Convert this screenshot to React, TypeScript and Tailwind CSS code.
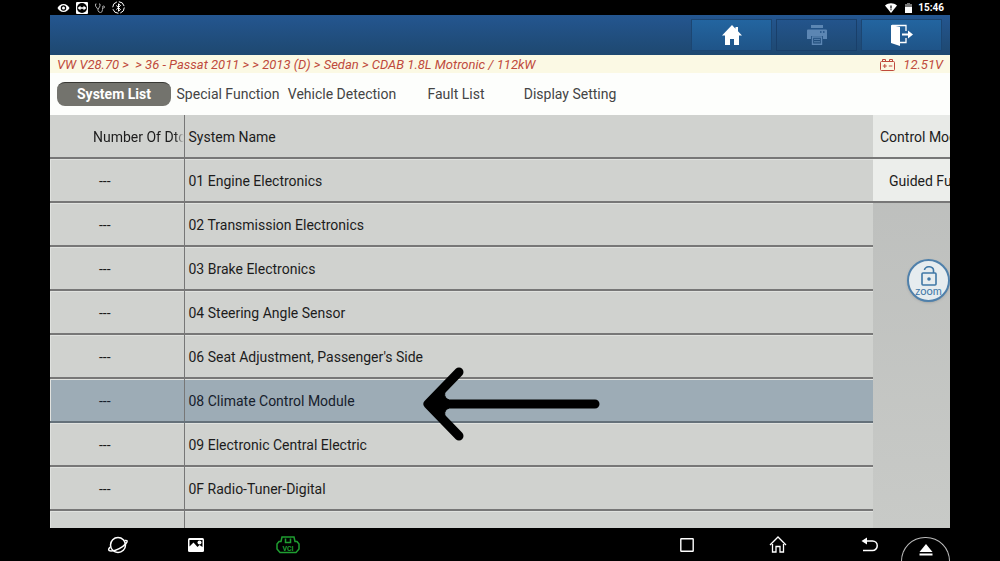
import React, { FC, ReactNode } from "react";

interface ISystem {
  code: string;
  name: string;
  active?: boolean;
}

interface IToolButton {
  label: string;
  disabled?: boolean;
  children: ReactNode;
}

const systems: ISystem[] = [
  { code: "01", name: "Engine Electronics" },
  { code: "02", name: "Transmission Electronics" },
  { code: "03", name: "Brake Electronics" },
  { code: "04", name: "Steering Angle Sensor" },
  { code: "06", name: "Seat Adjustment, Passenger's Side" },
  { code: "08", name: "Climate Control Module", active: true },
  { code: "09", name: "Electronic Central Electric" },
  { code: "0F", name: "Radio-Tuner-Digital" },
  { code: "10", name: "Parallel Parking Assist" },
];

const tabs = [
  "System List",
  "Special Function",
  "Vehicle Detection",
  "Fault List",
  "Display Setting",
];

const StatusBar: FC = () => (
  <div className="h-[15px] shrink-0 pl-[7px] pr-1.5 flex items-center justify-between text-white">
    <div className="flex items-center gap-[6px]">
      <svg width="13" height="12" viewBox="0 0 24 24" fill="currentColor">
        <path d="M12 4C6.500 4 2 7.500 0 12c2 4.500 6.500 8 12 8s10-3.500 12-8c-2-4.500-6.500-8-12-8zm0 13.500a5.500 5.500 0 1 1 0-11 5.500 5.500 0 0 1 0 11zm0-2.500a3 3 0 1 0 0-6 3 3 0 0 0 0 6z" />
      </svg>
      <svg width="12" height="12" viewBox="0 0 12 12">
        <rect width="12" height="12" rx="1" fill="#fff" />
        <circle cx="6" cy="6" r="5" fill="#000" />
        <path d="M1.500 6 4.500 3.800v1.400h3V3.800L10.500 6l-3 2.200V6.800h-3v1.400z" fill="#fff" />
      </svg>
      <svg width="12" height="12" viewBox="0 0 12 12" fill="none" stroke="#aaa">
        <path d="M2.500 2H1.500v2L4 7.500 6 4V2H5M4 7.500v1q.5 2 2.500 2t2-3V6" />
        <circle cx="9.500" cy="5" r="1" />
      </svg>
      <svg width="13" height="13" viewBox="0 0 13 13" fill="none" stroke="#fff">
        <circle cx="6.500" cy="6.500" r="5.800" strokeDasharray="7 2" />
        <path d="m4.300 4.500 4.200 4-2 1.700V2.800l2 1.700-4.200 4" />
      </svg>
    </div>
    <div className="flex items-center text-[10px] leading-none font-bold">
      <svg className="mr-2" width="12" height="10" viewBox="0 0 12 10">
        <path d="M0 2.500C3.500-.6 8.500-.6 12 2.500L6 10z" fill="#fff" />
        <path d="M6 2.500v3M6 6.300v1" stroke="#000" strokeWidth="1.200" />
      </svg>
      <svg className="mr-1.5" width="7" height="10" viewBox="0 0 7 10">
        <path d="M2 0h3v1h2v9H0V1h2z" fill="#fff" />
        <path d="M0 1h2V0h3v1h2v3H0z" fill="#777" />
      </svg>
      <span>15:46</span>
    </div>
  </div>
);

const ToolButton: FC<IToolButton> = ({ label, disabled, children }) => (
  <button
    aria-label={label}
    disabled={disabled}
    className="h-8 w-[81px] flex items-center justify-center border border-[#1c4672] bg-linear-to-b from-[#2365a0] to-[#1f5488] text-white disabled:bg-none disabled:border-[#193f6a] disabled:text-[#5c86b3]"
  >
    {children}
  </button>
);

const Header: FC = () => (
  <header className="h-10 shrink-0 pr-2 flex items-center justify-end gap-1 bg-linear-to-b from-[#245690] to-[#1e4870]">
    <ToolButton label="Home">
      <svg width="20" height="20" viewBox="0 0 20 20" fill="currentColor">
        <path d="M10 0 0 10.500h3V20h5v-6h4v6h5v-9.500h3L16 6.300V2h-2.500v1.700z" />
      </svg>
    </ToolButton>
    <ToolButton label="Print" disabled>
      <svg width="20" height="20" viewBox="0 0 20 20" fill="currentColor">
        <path d="M4 0h12v3H4zM1 4.500h18q1 0 1 1V14h-4v-3H4v3H0V5.500q0-1 1-1z" />
        <path d="M5.500 12h9v7.300h-9z" fill="none" stroke="currentColor" strokeWidth="1.400" />
        <path d="M7 14.300h6M7 16.800h6" stroke="currentColor" />
        <path d="M13 7h1.500M16 7h1.500" stroke="#1f4f83" strokeWidth="1.500" />
      </svg>
    </ToolButton>
    <ToolButton label="Exit">
      <svg width="22" height="22" viewBox="0 0 22 22" fill="currentColor">
        <path d="M0 1 9 3v19l-9-3z" />
        <path d="M1 1.500h14V7M15 14v4.500H9" fill="none" stroke="currentColor" strokeWidth="1.300" />
        <path d="M11 9.600h6V6.500l5 4-5 4v-3h-6z" />
      </svg>
    </ToolButton>
  </header>
);

const Breadcrumb: FC = () => (
  <div className="h-[18px] shrink-0 px-[7px] pt-0.5 flex items-center justify-between bg-[#fbf9e4] text-[#bf4a3c] text-[13px] leading-4 italic whitespace-pre">
    <span>{"VW V28.70 >  > 36 - Passat 2011 > > 2013 (D) > Sedan > CDAB 1.8L Motronic / 112kW"}</span>
    <span className="flex items-center gap-2">
      <svg width="15" height="12" viewBox="0 0 15 12" fill="none" stroke="currentColor">
        <rect x=".5" y="2.500" width="14" height="9" rx="1" />
        <path d="M2.500 2V.5h3V2M9.500 2V.5h3V2M2.800 7h4M4.800 5v4M8.800 7h3.500" />
      </svg>
      12.51V
    </span>
  </div>
);

const Tabs: FC = () => (
  <nav className="h-[42px] shrink-0 px-[7px] flex items-center bg-[#fdfefc] text-[14px] text-[#444]">
    {tabs.map((title, i) => (
      <button
        key={title}
        className={
          i === 0
            ? "w-[114px] h-6 rounded-lg border-t border-[#383834] bg-[#73736d] font-bold text-white"
            : "w-[114px] h-6 whitespace-nowrap"
        }
      >
        {title}
      </button>
    ))}
  </nav>
);

const SystemTable: FC = () => (
  <table className="w-full table-fixed border-collapse text-left">
    <thead>
      <tr className="h-[43px] border-b-2 border-[#777]">
        <th className="w-[134px] p-0 pt-0.5 pl-[43px] border-r border-[#777] font-normal whitespace-nowrap">
          <div className="overflow-hidden bg-linear-to-r from-[#1c1c1c] from-90% to-transparent bg-clip-text text-transparent">
            Number Of Dtc
          </div>
        </th>
        <th className="p-0 pt-0.5 pl-1 font-normal">System Name</th>
      </tr>
    </thead>
    <tbody>
      {systems.map((s) => (
        <tr
          key={s.code}
          className={
            s.active
              ? "h-11 border-b-2 border-[#65717a] bg-[#9dacb6] text-[#16202c]"
              : "h-11 last:h-[46px] border-b-2 border-[#777]"
          }
        >
          <td className="p-0 pt-0.5 pl-[49px] border-r border-[#777] shadow-[inset_1px_1px_#e0e2df]">
            ---
          </td>
          <td className="p-0 pt-0.5 pl-1 whitespace-nowrap shadow-[inset_0_1px_#e0e2df]">
            {s.code} {s.name}
          </td>
        </tr>
      ))}
    </tbody>
  </table>
);

const SidePanel: FC = () => (
  <aside className="w-[77px] shrink-0 self-stretch overflow-hidden bg-linear-to-b from-[#bbbdbb] to-[#c8cac7] whitespace-nowrap">
    <div className="h-11 pt-0.5 pl-[7px] flex items-center border-b-2 border-[#777] bg-[#e8eae7]">
      Control Module
    </div>
    <button className="h-11 w-full pt-0.5 pl-4 flex items-center border-b-2 border-[#777] bg-[#eceeeb]">
      Guided Functions
    </button>
  </aside>
);

const ZoomButton: FC = () => (
  <button className="absolute top-[144px] right-0 size-[43px] rounded-full border-2 border-[#4f80ab] bg-[#e6ecef] flex flex-col items-center justify-center text-[#3f77a6] shadow">
    <svg width="18" height="20" viewBox="0 0 18 20" fill="none" stroke="currentColor" strokeWidth="1.600">
      <rect x="2" y="7" width="14" height="12" rx="1" />
      <path d="M4.500 4a4.500 3.500 0 0 1 9 0.500V7" />
      <circle cx="9" cy="13" r="1" fill="currentColor" />
    </svg>
    <span className="text-[11px] leading-[10px] font-[Lato,sans-serif]">zoom</span>
  </button>
);

const Arrow: FC = () => (
  <svg
    className="absolute top-[252px] left-[372px]"
    width="180"
    height="74"
    viewBox="0 0 180 74"
    fill="none"
    stroke="#000"
    strokeWidth="9"
    strokeLinecap="round"
    strokeLinejoin="round"
  >
    <path d="M6 37h167M37 5 6 37l31 32" />
    <path d="M8 37 24 20q-4 11 3 13v8q-7 2-3 13z" fill="#000" strokeWidth="1" />
  </svg>
);

const NavBar: FC = () => (
  <footer className="h-[33px] shrink-0 pl-[57px] flex items-center justify-between bg-black text-white">
    <div className="flex items-center">
      <button aria-label="Browser">
        <svg width="22" height="18" viewBox="0 0 22 18" fill="none" stroke="currentColor" strokeWidth="1.500">
          <circle cx="11" cy="9" r="7.500" />
          <path d="M17.500 4.500c3-.5 3.500.5 1.500 3C16 11 9 15 4 15c-3 0-3-1.500-1-4" />
        </svg>
      </button>
      <button aria-label="Screenshot" className="ml-[59px]">
        <svg width="16" height="14" viewBox="0 0 16 14">
          <rect width="16" height="14" rx="1.500" fill="#fff" />
          <path d="m1.500 8.500 4-4 4 4.500 2-2 3 2V2h-13z" fill="#000" />
          <circle cx="11.500" cy="4.500" r="2" fill="#fff" />
        </svg>
      </button>
      <button aria-label="VCI" className="ml-[72px]">
        <svg width="24" height="18" viewBox="0 0 24 18" fill="none" stroke="#1f9e31" strokeWidth="1.500">
          <path d="M6 1h12l1 4.500h2L23 8v5l-3 3.500H4L1 13V8l2-2.500h2z" />
          <path d="M9.500 2.500v4h5v-4" />
          <text x="12" y="14.500" textAnchor="middle" fontSize="7" fontWeight="700" fill="#1f9e31" stroke="none">
            VCI
          </text>
        </svg>
      </button>
    </div>
    <div className="flex items-center self-stretch">
      <button aria-label="Recent apps">
        <svg width="14" height="14" viewBox="0 0 14 14" fill="none" stroke="currentColor" strokeWidth="1.400">
          <rect x=".8" y=".8" width="12.400" height="12.400" rx=".5" />
        </svg>
      </button>
      <button aria-label="Home screen" className="ml-[75px]">
        <svg width="18" height="17" viewBox="0 0 18 17" fill="none" stroke="currentColor" strokeWidth="1.300">
          <path d="m1 9 8-8 8 8M3.500 8v8H7v-5.500h4V16h3.500V8" />
        </svg>
      </button>
      <button aria-label="Back" className="ml-[74px]">
        <svg width="17" height="15" viewBox="0 0 17 15" fill="none" stroke="currentColor" strokeWidth="1.500">
          <path d="M4 4h7.500a4.700 4.700 0 0 1 0 9.500H2" />
          <path d="M.5 4 6 .5v7z" fill="currentColor" stroke="none" />
        </svg>
      </button>
      <button
        aria-label="Eject"
        className="ml-[23px] mt-[9px] w-[49px] self-stretch rounded-t-full border border-b-0 border-[#bbb] flex items-center justify-center"
      >
        <svg width="14" height="12" viewBox="0 0 14 12" fill="currentColor">
          <path d="m7 0 6.500 8H.5zM.5 9.500h13v2H.5z" />
        </svg>
      </button>
    </div>
  </footer>
);

export default function App() {
  return (
    <div className="h-screen px-[5%] flex flex-col bg-black font-[Roboto,sans-serif] overflow-hidden">
      <StatusBar />
      <Header />
      <Breadcrumb />
      <Tabs />
      <main className="relative flex-1 min-h-0 overflow-hidden flex items-start bg-[#d0d2cf] text-[14px] text-[#1c1c1c]">
        <div className="flex-1 min-w-0">
          <SystemTable />
        </div>
        <SidePanel />
        <Arrow />
        <ZoomButton />
      </main>
      <NavBar />
    </div>
  );
}
